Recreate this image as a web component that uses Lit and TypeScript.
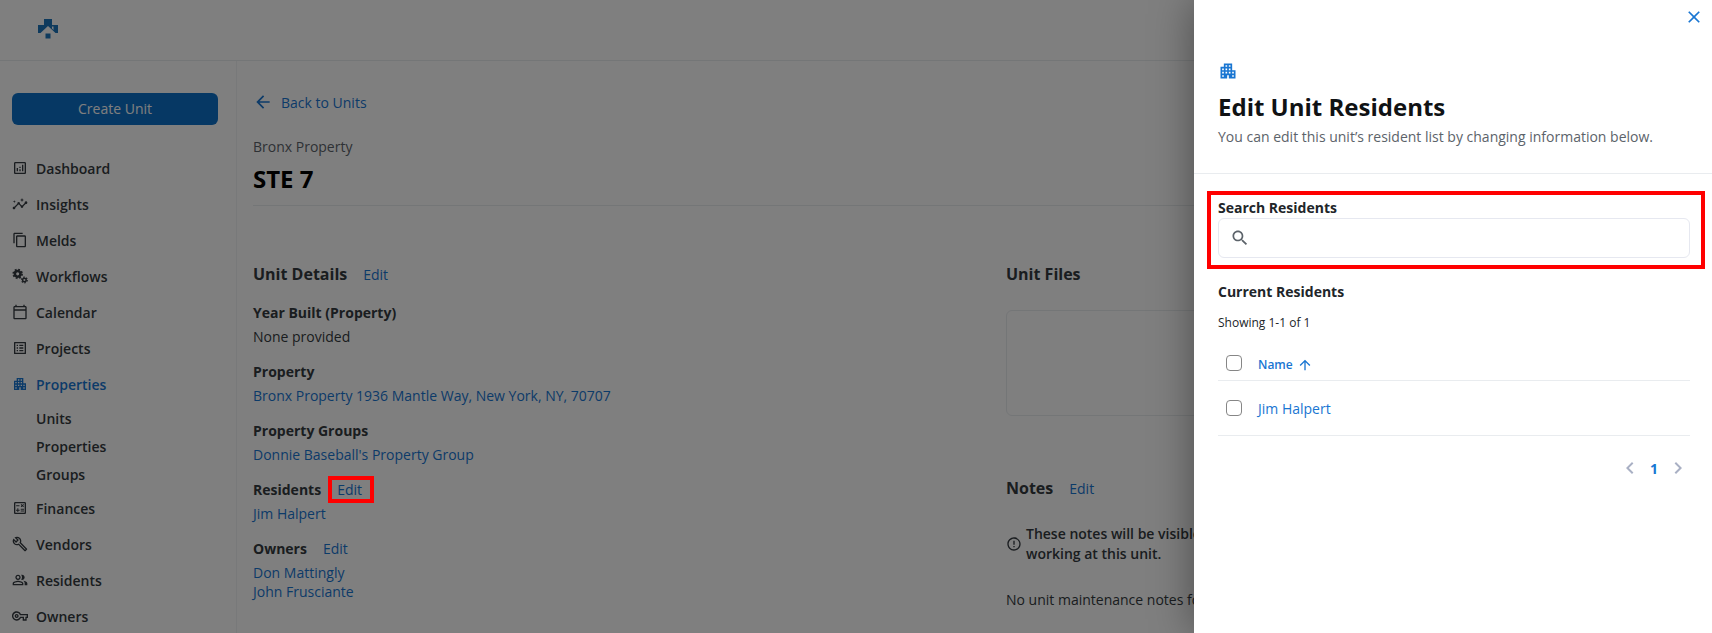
import { LitElement, html, css, svg, nothing } from "lit";
import { customElement, property } from "lit/decorators.js";

const FRAME = "M19 3H5c-1.1 0-2 .9-2 2v14c0 1.1.9 2 2 2h14c1.1 0 2-.9 2-2V5c0-1.1-.9-2-2-2zm0 16H5V5h14v14z";

const ICONS: Record<string, string> = {
  back: "M20 11H7.83l5.59-5.59L12 4l-8 8 8 8 1.41-1.41L7.83 13H20v-2z",
  close: "M19 6.41 17.59 5 12 10.59 6.41 5 5 6.41 10.59 12 5 17.59 6.41 19 12 13.41 17.59 19 19 17.59 13.41 12z",
  apartment:
    "M17 11V3H7v4H3v14h8v-4h2v4h8V11h-4zM7 19H5v-2h2v2zm0-4H5v-2h2v2zm0-4H5V9h2v2zm4 4H9v-2h2v2zm0-4H9V9h2v2zm0-4H9V5h2v2zm4 8h-2v-2h2v2zm0-4h-2V9h2v2zm0-4h-2V5h2v2zm4 12h-2v-2h2v2zm0-4h-2v-2h2v2z",
  dashboard: FRAME + "M7 12h2v5H7zm8-5h2v10h-2zm-4 7h2v3h-2zm0-4h2v2h-2z",
  insights:
    "M21 8c-1.45 0-2.26 1.44-1.93 2.51l-3.55 3.56c-.3-.09-.74-.09-1.04 0l-2.55-2.55C12.27 10.45 11.46 9 10 9c-1.45 0-2.27 1.44-1.93 2.52l-4.56 4.55C2.44 15.74 1 16.55 1 18c0 1.1.9 2 2 2 1.45 0 2.26-1.44 1.93-2.51l4.55-4.56c.3.09.74.09 1.04 0l2.55 2.55C12.73 16.55 13.54 18 15 18c1.45 0 2.27-1.44 1.93-2.52l3.56-3.55C21.56 12.26 23 11.45 23 10c0-1.1-.9-2-2-2zM15 9l.94-2.07L18 6l-2.06-.93L15 3l-.92 2.07L12 6l2.08.93zM3.5 11 4 9l2-.5L4 8l-.5-2L3 8l-2 .5L3 9z",
  copy: "M16 1H4c-1.1 0-2 .9-2 2v14h2V3h12V1zm3 4H8c-1.1 0-2 .9-2 2v14c0 1.1.9 2 2 2h11c1.1 0 2-.9 2-2V7c0-1.1-.9-2-2-2zm0 16H8V7h11v14z",
  calendar:
    "M20 3h-1V1h-2v2H7V1H5v2H4c-1.1 0-2 .9-2 2v16c0 1.1.9 2 2 2h16c1.1 0 2-.9 2-2V5c0-1.1-.9-2-2-2zm0 18H4V10h16v11zm0-13H4V5h16v3z",
  list: "M19 5v14H5V5h14m1.1-2H3.9c-.5 0-.9.4-.9.9v16.2c0 .4.4.9.9.9h16.2c.4 0 .9-.5.9-.9V3.9c0-.5-.5-.9-.9-.9zM11 7h6v2h-6V7zm0 4h6v2h-6v-2zm0 4h6v2h-6zM7 7h2v2H7zm0 4h2v2H7zm0 4h2v2H7z",
  calculate:
    FRAME +
    "M6.25 7.72h5v1.5h-5zM13 15.75h5v1.5h-5zm0-2.5h5v1.5h-5zM8 18h1.5v-2h2v-1.5h-2v-2H8v2H6V16h2zm6.09-7.05 1.41-1.41 1.41 1.41 1.06-1.06-1.41-1.42 1.41-1.41L16.91 6 15.5 7.41 14.09 6l-1.06 1.06 1.41 1.41-1.41 1.42z",
  wrench:
    "M22.61 18.99l-9.08-9.08c.93-2.34.45-5.1-1.44-7C9.79.61 6.21.4 3.66 2.26L7.5 6.11 6.08 7.52 2.25 3.69C.39 6.23.6 9.82 2.9 12.11c1.86 1.86 4.57 2.35 6.89 1.48l9.11 9.11c.39.39 1.02.39 1.41 0l2.3-2.3c.4-.38.4-1.01 0-1.41zm-3 1.6l-9.46-9.46c-.61.45-1.29.72-2 .82-1.36.2-2.79-.21-3.83-1.25C3.37 9.76 2.93 8.5 3 7.26l3.09 3.09 4.24-4.24-3.09-3.09c1.24-.07 2.49.37 3.44 1.31 1.08 1.08 1.49 2.57 1.24 3.96-.12.71-.42 1.37-.88 1.96l9.45 9.45-.88.89z",
  people:
    "M16.67 13.13C18.04 14.06 19 15.32 19 17v3h4v-3c0-2.18-3.57-3.47-6.33-3.87zM15 12c2.21 0 4-1.79 4-4s-1.79-4-4-4c-.47 0-.91.1-1.33.24C14.5 5.27 15 6.58 15 8s-.5 2.73-1.33 3.76c.42.14.86.24 1.33.24zM9 12c2.21 0 4-1.79 4-4s-1.79-4-4-4-4 1.79-4 4 1.79 4 4 4zm0-6c1.1 0 2 .9 2 2s-.9 2-2 2-2-.9-2-2 .9-2 2-2zm0 7c-2.67 0-8 1.34-8 4v3h16v-3c0-2.66-5.33-4-8-4zm6 5H3v-.99C3.2 16.29 6.3 15 9 15s5.8 1.29 6 2v1z",
  key: "M22 19h-6v-4h-2.68c-1.14 2.42-3.6 4-6.32 4-3.86 0-7-3.14-7-7s3.14-7 7-7c2.72 0 5.17 1.58 6.32 4H24v6h-2v4zm-4-2h2v-4h2v-2H11.94l-.23-.67C11.01 8.34 9.11 7 7 7c-2.76 0-5 2.24-5 5s2.24 5 5 5c2.11 0 4.01-1.34 4.71-3.33l.23-.67H18v4zM7 15c-1.65 0-3-1.35-3-3s1.35-3 3-3 3 1.35 3 3-1.35 3-3 3zm0-4c-.55 0-1 .45-1 1s.45 1 1 1 1-.45 1-1-.45-1-1-1z",
  info: "M11 15h2v2h-2v-2zm0-8h2v6h-2V7zm.99-5C6.47 2 2 6.48 2 12s4.47 10 9.99 10C17.52 22 22 17.52 22 12S17.52 2 11.99 2zM12 20c-4.42 0-8-3.58-8-8s3.58-8 8-8 8 3.58 8 8-3.58 8-8 8z",
  search:
    "M15.5 14h-.79l-.28-.27C15.41 12.59 16 11.11 16 9.5 16 5.91 13.09 3 9.5 3S3 5.91 3 9.5 5.91 16 9.5 16c1.61 0 3.09-.59 4.23-1.57l.27.28v.79l5 4.99L20.49 19l-4.99-5zm-6 0C7.01 14 5 11.99 5 9.5S7.01 5 9.5 5 14 7.01 14 9.5 11.99 14 9.5 14z",
  up: "M4 12l1.41 1.41L11 7.83V20h2V7.83l5.58 5.59L20 12l-8-8-8 8z",
  prev: "M15.41 7.41 14 6l-6 6 6 6 1.41-1.41L10.83 12z",
  next: "M10 6 8.59 7.41 13.17 12l-4.58 4.59L10 18l6-6z",
};

@customElement("ui-icon")
class UiIcon extends LitElement {
  @property() name = "";
  @property({ type: Number }) size = 16;

  static styles = css`
    :host { display: inline-flex; flex: none; }
    svg { display: block; fill: currentColor; }
    .teeth { fill: none; stroke: currentColor; }
  `;

  private gears() {
    return svg`
      <circle class="teeth" cx="8.5" cy="8.8" r="4.2" stroke-width="3.8"></circle>
      <circle class="teeth" cx="8.5" cy="8.8" r="6.6" stroke-width="2.6" stroke-dasharray="2.7 2.48"></circle>
      <circle class="teeth" cx="18.6" cy="18" r="2.7" stroke-width="2.2"></circle>
      <circle class="teeth" cx="18.6" cy="18" r="4.3" stroke-width="1.8" stroke-dasharray="2.2 2.3"></circle>`;
  }

  render() {
    return html`<svg width=${this.size} height=${this.size} viewBox="0 0 24 24" aria-hidden="true">
      ${this.name === "gears" ? this.gears() : svg`<path fill-rule="evenodd" d=${ICONS[this.name]}></path>`}
    </svg>`;
  }
}

interface NavItem {
  label: string;
  icon: string;
  active?: boolean;
  children?: string[];
}

const NAV: NavItem[] = [
  { label: "Dashboard", icon: "dashboard" },
  { label: "Insights", icon: "insights" },
  { label: "Melds", icon: "copy" },
  { label: "Workflows", icon: "gears" },
  { label: "Calendar", icon: "calendar" },
  { label: "Projects", icon: "list" },
  { label: "Properties", icon: "apartment", active: true, children: ["Units", "Properties", "Groups"] },
  { label: "Finances", icon: "calculate" },
  { label: "Vendors", icon: "wrench" },
  { label: "Residents", icon: "people" },
  { label: "Owners", icon: "key" },
];

@customElement("side-nav")
class SideNav extends LitElement {
  static styles = css`
    :host { display: block; box-sizing: border-box; padding: 32px 18px 0 12px; border-right: 1px solid #f1f3f5; }
    .create { display: block; width: 100%; height: 32px; margin: 0 0 25px; padding: 0 0 2px; border: 0; border-radius: 6px; background: #0d71c8; color: #fff; font: inherit; font-weight: 500; }
    ul { list-style: none; margin: 0; padding: 0; }
    a { display: flex; align-items: center; gap: 8px; height: 36px; color: #343a40; font-weight: 600; text-decoration: none; }
    .active { color: #1976d2; }
    .sub { padding: 2px 0 2px 24px; }
    .sub a { height: 28px; }
  `;

  render() {
    return html`
      <button class="create" type="button">Create Unit</button>
      <nav aria-label="Main">
        <ul>
          ${NAV.map(
            (item) => html`<li>
              <a class=${item.active ? "active" : ""} href="#"><ui-icon name=${item.icon}></ui-icon>${item.label}</a>
              ${item.children
                ? html`<ul class="sub">${item.children.map((c) => html`<li><a href="#">${c}</a></li>`)}</ul>`
                : nothing}
            </li>`
          )}
        </ul>
      </nav>
    `;
  }
}

interface Detail {
  title: string;
  values: string[];
  linked?: boolean;
  editable?: boolean;
  marked?: boolean;
}

const DETAILS: Detail[] = [
  { title: "Year Built (Property)", values: ["None provided"] },
  { title: "Property", values: ["Bronx Property 1936 Mantle Way, New York, NY, 70707"], linked: true },
  { title: "Property Groups", values: ["Donnie Baseball's Property Group"], linked: true },
  { title: "Residents", values: ["Jim Halpert"], linked: true, editable: true, marked: true },
  { title: "Owners", values: ["Don Mattingly", "John Frusciante"], linked: true, editable: true },
];

@customElement("unit-page")
class UnitPage extends LitElement {
  static styles = css`
    :host { display: block; box-sizing: border-box; min-width: 0; padding: 31px 16px 0; line-height: 19px; color: #343a40; }
    a { color: #1976d2; text-decoration: none; }
    h1, h2, h3, p { margin: 0; }
    .back { display: inline-flex; align-items: center; gap: 8px; height: 20px; }
    .property { margin-top: 21px; color: #5c636a; }
    h1 { margin-top: 6px; padding-bottom: 10px; border-bottom: 1px solid #e9ecef; color: #000; font-size: 24px; line-height: 33px; font-weight: 700; }
    .columns { display: grid; grid-template-columns: 737px minmax(0, 1fr); gap: 16px; margin-top: 57px; }
    .heading { display: flex; align-items: baseline; gap: 16px; }
    h2 { font-size: 16px; line-height: 22px; font-weight: 700; }
    h3 { font-size: 14px; line-height: 19px; font-weight: 700; }
    .details { display: grid; gap: 16px; margin-top: 18px; }
    .row { display: flex; gap: 16px; margin-bottom: 5px; }
    .value { display: block; }
    .marked { position: relative; }
    .marked::after { content: ""; position: absolute; z-index: 3; inset: -4px -12px -4px -9px; border: 4px solid #f00; }
    .files { height: 104px; margin: 25px 0 61px; border: 1px solid #e9ecef; border-radius: 6px; }
    .notice { display: flex; align-items: center; gap: 4px; max-width: 400px; margin: 25px 0 26px; font-weight: 600; line-height: 20px; }
  `;

  render() {
    return html`
      <a class="back" href="#"><ui-icon name="back" size="20"></ui-icon>Back to Units</a>
      <p class="property">Bronx Property</p>
      <h1>STE 7</h1>
      <div class="columns">
        <section>
          <div class="heading"><h2>Unit Details</h2><a href="#">Edit</a></div>
          <div class="details">
            ${DETAILS.map(
              (d) => html`<div>
                <div class="row">
                  <h3>${d.title}</h3>
                  ${d.editable ? html`<a class=${d.marked ? "marked" : ""} href="#">Edit</a>` : nothing}
                </div>
                ${d.values.map((v) =>
                  d.linked ? html`<a class="value" href="#">${v}</a>` : html`<span class="value">${v}</span>`
                )}
              </div>`
            )}
          </div>
        </section>
        <section>
          <div class="heading"><h2>Unit Files</h2></div>
          <div class="files"></div>
          <div class="heading"><h2>Notes</h2><a href="#">Edit</a></div>
          <div class="notice">
            <ui-icon name="info"></ui-icon>
            <p>These notes will be visible to anyone who is currently working at this unit.</p>
          </div>
          <p>No unit maintenance notes for this unit.</p>
        </section>
      </div>
    `;
  }
}

@customElement("residents-drawer")
class ResidentsDrawer extends LitElement {
  static styles = css`
    :host { display: block; box-sizing: border-box; background: #fff; box-shadow: 0 0 40px rgba(0, 0, 0, 0.4); color: #212529; line-height: 19px; }
    button { display: inline-flex; align-items: center; padding: 0; border: 0; background: none; color: #1976d2; font: inherit; }
    h2, h3, p { margin: 0; }
    .top { display: flex; justify-content: flex-end; padding: 7px 8px 0 0; }
    header { padding: 34px 24px 27px; border-bottom: 1px solid #e9ecef; color: #5c636a; }
    header ui-icon { color: #1976d2; }
    h2 { margin: 6px 0 4px; color: #101214; font-size: 24px; line-height: 32px; font-weight: 700; }
    .body { padding: 24px 22px 24px 24px; }
    .field { position: relative; margin-bottom: 24px; }
    .field::after { content: ""; position: absolute; inset: -7px -15px -11px -11px; border: 4px solid #f00; pointer-events: none; }
    label.title, h3 { display: block; font-size: 14px; line-height: 20px; font-weight: 700; }
    .box { display: flex; align-items: center; gap: 12px; box-sizing: border-box; height: 40px; padding: 0 11px; border: 1px solid #e6e8f0; border-radius: 6px; color: #5c636a; }
    .box input { flex: 1; min-width: 0; border: 0; outline: 0; background: none; font: inherit; }
    .count { margin: 13px 0 15px; font-size: 12px; line-height: 16px; }
    table { width: 100%; border-collapse: collapse; }
    th, td { height: 34px; padding: 0; border-bottom: 1px solid #e9ecef; text-align: left; font-weight: 400; }
    td { height: 54px; }
    .pick { width: 40px; }
    .pick input { appearance: none; display: block; box-sizing: border-box; width: 16px; height: 16px; margin: 0 0 0 8px; border: 1px solid #868686; border-radius: 4px; background: #fff; }
    .sort { gap: 4px; font-size: 12px; line-height: 16px; font-weight: 600; }
    td a { color: #1976d2; text-decoration: none; }
    .pager { display: flex; align-items: center; justify-content: flex-end; gap: 4px; padding-top: 20px; color: #1976d2; font-weight: 700; }
    .pager span { width: 16px; text-align: center; }
    .pager button { color: #a9b0c4; }
  `;

  render() {
    return html`
      <div class="top"><button type="button" aria-label="Close"><ui-icon name="close" size="20"></ui-icon></button></div>
      <header>
        <ui-icon name="apartment" size="20"></ui-icon>
        <h2>Edit Unit Residents</h2>
        <p>You can edit this unit’s resident list by changing information below.</p>
      </header>
      <div class="body">
        <div class="field">
          <label class="title" for="search">Search Residents</label>
          <div class="box"><ui-icon name="search" size="20"></ui-icon><input id="search" type="text" /></div>
        </div>
        <h3>Current Residents</h3>
        <p class="count">Showing 1-1 of 1</p>
        <table>
          <thead>
            <tr>
              <th class="pick"><input type="checkbox" aria-label="Select all residents" /></th>
              <th><button class="sort" type="button">Name<ui-icon name="up"></ui-icon></button></th>
            </tr>
          </thead>
          <tbody>
            <tr>
              <td class="pick"><input type="checkbox" aria-label="Select Jim Halpert" /></td>
              <td><a href="#">Jim Halpert</a></td>
            </tr>
          </tbody>
        </table>
        <div class="pager">
          <button type="button" aria-label="Previous page"><ui-icon name="prev" size="24"></ui-icon></button>
          <span>1</span>
          <button type="button" aria-label="Next page"><ui-icon name="next" size="24"></ui-icon></button>
        </div>
      </div>
    `;
  }
}

@customElement("app-root")
class AppRoot extends LitElement {
  static styles = css`
    :host { display: block; position: relative; height: 100vh; overflow: hidden; background: #fff; font: 14px/19px "Open Sans", "Noto Sans", sans-serif; }
    .bar { display: flex; align-items: center; box-sizing: border-box; height: 61px; padding: 0 37px 3px; border-bottom: 1px solid #e9ecef; }
    .logo { display: block; fill: #1d74bb; }
    .shell { display: grid; grid-template-columns: 237px minmax(0, 1fr); min-height: calc(100vh - 61px); }
    .scrim { position: absolute; inset: 0; z-index: 1; background: rgba(0, 0, 0, 0.5); }
    .drawer { position: absolute; z-index: 2; top: 0; right: 0; bottom: 0; width: 518px; }
  `;

  render() {
    return html`
      <div class="bar">
        <svg class="logo" width="22" height="22" viewBox="0 0 22 22" role="img" aria-label="Home">
          <path fill-rule="evenodd" d="M7 1h8v6h6v8h-2.500L11 8 3.500 15H1V7h6zM15 8.500v2l1.500 1.500V8.500z"></path>
          <path d="M8.500 15.500h5v5h-5z"></path>
        </svg>
      </div>
      <div class="shell">
        <side-nav></side-nav>
        <unit-page></unit-page>
      </div>
      <div class="scrim"></div>
      <residents-drawer class="drawer" role="dialog" aria-label="Edit Unit Residents"></residents-drawer>
    `;
  }
}
